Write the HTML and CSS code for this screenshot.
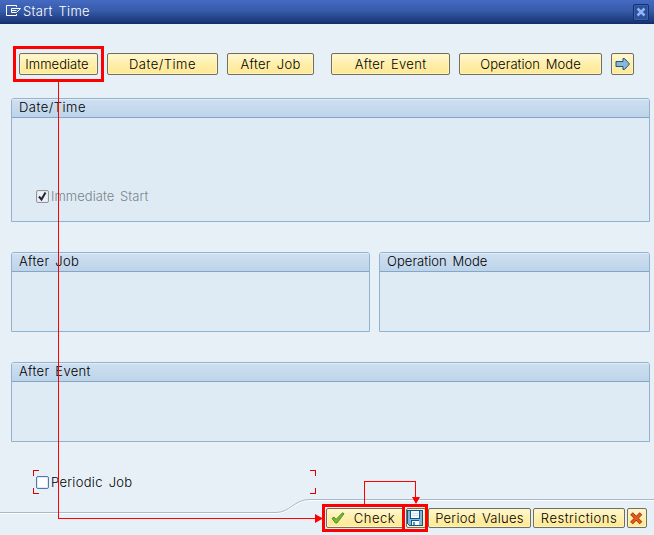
FILE: index.html
```html
<!DOCTYPE html>
<html lang="en">
<head>
<meta charset="utf-8">
<title>Start Time</title>
<link rel="stylesheet" href="styles.css">
</head>
<body>
<div class="dialog">
  <header class="titlebar">
    <svg class="title-icon" width="16" height="12" viewBox="0 0 16 12" fill="none" stroke="#fff"><path d="M10.500 2V.5H.5v10h10V9M14.500 3.500H5.500v4h5M5.500 5.500h5M14.500 3.500l-4 4"/></svg>
    <h1>Start Time</h1>
    <button class="close" aria-label="Close"><svg width="10" height="10" viewBox="0 0 10 10"><path d="M1.500 1.500l7 7M8.500 1.500l-7 7" stroke="#8fb4f8" stroke-width="2.500"/></svg></button>
  </header>
  <main>
    <nav class="toolbar">
      <button class="btn immediate"><span class="tight">Immediate</span></button>
      <button class="btn date"><span class="loose">Date/Time</span></button>
      <button class="btn job"><span>After Job</span></button>
      <button class="btn event"><span>After Event</span></button>
      <button class="btn mode"><span class="tight">Operation Mode</span></button>
      <button class="btn next" aria-label="Next"><svg width="16" height="14" viewBox="0 0 16 14"><path d="M1 4.500h7v-3h1.500l5 5.500-5 5.500H8v-3H1z" fill="#8fb5d3" stroke="#075b91"/></svg></button>
    </nav>
    <section class="group tall"><h2><span class="loose">Date/Time</span></h2>
      <label class="check-row disabled"><i class="box"><svg width="11" height="11" viewBox="0 0 11 11"><path d="M2 5.500L4.500 8.500l4-7" fill="none" stroke="#1c2440" stroke-width="2"/></svg></i><span class="tight">Immediate Start</span></label>
    </section>
    <div class="columns">
      <section class="group"><h2><span>After Job</span></h2></section>
      <section class="group"><h2><span class="tight">Operation Mode</span></h2></section>
    </div>
    <section class="group"><h2><span>After Event</span></h2></section>
    <div class="focus"><label class="check-row"><i class="box"></i><span>Periodic Job</span></label>
      <svg class="corners" width="283" height="24" viewBox="0 0 283 24" fill="none" stroke="#d00" shape-rendering="crispEdges"><path d="M6 .5H.5V6M.5 18v5.500H6M277 .5h5.500V6M277 23.500h5.500V18"/></svg>
    </div>
  </main>
  <footer>
    <svg class="divider" width="654" height="18" viewBox="0 0 654 18" fill="none"><path d="M0 15.500h276c14 0 18-13 34-13h344" transform="translate(0 -1)" stroke="#fff"/><path d="M0 14.500h276c14 0 18-13 34-13h344" transform="translate(0 -1)" stroke="#a9b8cc"/></svg>
    <div class="actions">
      <button class="btn check"><svg width="14" height="12" viewBox="0 0 14 12"><path d="M1 6.500l2-1.500 2 2.500L11.500.8l1.500.9L6 11H4.500z" fill="#79bd2c" stroke="#4b8a32"/></svg><span class="loose">Check</span></button>
      <button class="btn save" aria-label="Save"><svg width="16" height="16" viewBox="0 0 16 16" shape-rendering="crispEdges"><path d="M.5.500h15v15h-13l-2-2z" fill="#86b5d7" stroke="#075b91"/><path d="M4 1h8v7H4z" fill="#f4f8fb"/><path d="M3.500 1v7.500h9V1" stroke="#075b91" fill="none"/><path d="M5 3.500h6M5 5.500h6" stroke="#d2e2ee"/><path d="M5 11h7v4H5z" fill="#fff"/><path d="M4.500 15v-4.500h7" stroke="#075b91" fill="none"/><path d="M6 12h2v3H6z" fill="#5b93bb"/></svg></button>
      <button class="btn period"><span>Period Values</span></button>
      <button class="btn restrict"><span class="loose">Restrictions</span></button>
      <button class="btn cancel" aria-label="Cancel"><svg width="13" height="13" viewBox="0 0 13 13"><path d="M1.500 1.500l9.500 9.500M11 1.500L1.500 11" stroke="#a83a18" stroke-width="3.800"/><path d="M2 2l8.500 8.500M10.500 2L2 10.500" stroke="#e65b16" stroke-width="2.200"/></svg></button>
    </div>
  </footer>
  <svg class="annotations" width="654" height="535" viewBox="0 0 654 535" fill="none">
    <g stroke="#f00" stroke-width="3" shape-rendering="crispEdges"><path d="M14.500 47.500h88v33h-88z"/><path d="M323.500 505.500h80v25h-80zM403.500 505.500h23v25h-23z"/></g>
    <path d="M58.500 82v436.500H316M364.500 504v-22.500h51V498" stroke="#f00" shape-rendering="crispEdges"/>
    <path d="M315 514l8 4.500-8 4.500zM412 497h8l-4 7z" fill="#f00"/>
  </svg>
</div>
</body>
</html>
```
FILE: styles.css
```css
* { box-sizing: border-box; }
body { margin: 0; font: 300 13px/18px Inter, "Noto Sans CJK JP", sans-serif; word-spacing: 2px; color: #000; }
.dialog { position: relative; width: 654px; height: 535px; overflow: hidden; background: #e8f0f7; display: flex; flex-direction: column; }
h1, h2 { margin: 0; font: inherit; letter-spacing: .3px; white-space: nowrap; }
span { letter-spacing: .3px; }
.tight { letter-spacing: .05px; }
.loose { letter-spacing: .5px; }
.titlebar { height: 24px; flex: none; display: flex; align-items: center; padding: 0 5px 0 6px; color: #fff; background: linear-gradient(#456ac2, #365ba8 45%, #1b387b 90%, #102b62); }
.title-icon { margin: -3px 1px 0 0; }
h1 { flex: 1; margin-top: -3px; }
.close { width: 16px; height: 17px; padding: 0; display: grid; place-items: center; border: 1px solid #14316d; border-radius: 2px; background: #2d4f98; box-shadow: inset 0 0 0 1px #3a60b1; }
main { flex: none; height: 474px; padding: 29px 4px 0 11px; }
.toolbar { display: flex; height: 22px; padding-left: 8px; }
.btn { height: 22px; padding: 0; flex: none; display: flex; align-items: center; justify-content: center; font: inherit; word-spacing: inherit; color: #000; white-space: nowrap; border: 1px solid #70705f; border-radius: 2px; background: linear-gradient(#fff8d6, #fff0b0 40%, #ffe892); box-shadow: inset 0 0 0 1px #fff4bf; }
.btn svg { flex: none; }
.immediate { width: 79px; margin-right: 9px; padding-right: 3px; }
.date { width: 111px; margin-right: 9px; }
.job { width: 87px; margin-right: 17px; }
.event { width: 119px; margin-right: 9px; }
.mode { width: 143px; margin-right: 9px; }
.next { width: 23px; }
.group { height: 80px; border: 1px solid #93b2ce; border-radius: 3px 3px 0 0; background: #deebf4; margin-top: 30px; }
.group h2 { height: 19px; padding-left: 7px; line-height: 15px; border-top: 1px solid #e1edf8; border-bottom: 1px solid #86a6c8; border-radius: 2px 2px 0 0; background: linear-gradient(#cedff0, #bdd4e9); }
.tall { height: 124px; margin-top: 23px; }
.columns { display: grid; grid-template-columns: 359px 271px; gap: 9px; }
.check-row { display: flex; align-items: center; gap: 2px; height: 18px; }
.disabled { margin: 69px 0 0 24px; color: #7c838a; }
.box { width: 13px; height: 13px; flex: none; display: grid; place-items: center; border: 1px solid #4a7ab0; border-radius: 2px; background: #fff; box-shadow: inset 0 0 0 1px #e4e8f1; }
.disabled .box { border-color: #939493; background: #eef1f2; }
.focus { position: relative; width: 283px; height: 24px; margin: 28px 0 0 22px; padding: 3px 0 0 3px; }
.corners { position: absolute; inset: 0; }
footer { position: relative; flex: 1; }
.divider { position: absolute; left: 0; top: 1px; }
.actions { position: relative; display: flex; justify-content: flex-end; gap: 2px; padding: 10px 7px 0 0; }
.actions .btn { height: 20px; }
.check { width: 78px; gap: 9px; padding-right: 4px; }
.actions .save { width: 20px; padding-right: 2px; }
.period { width: 103px; }
.restrict { width: 92px; }
.actions .cancel { width: 20px; padding-right: 1px; }
.annotations { position: absolute; left: 0; top: 0; pointer-events: none; }
```
